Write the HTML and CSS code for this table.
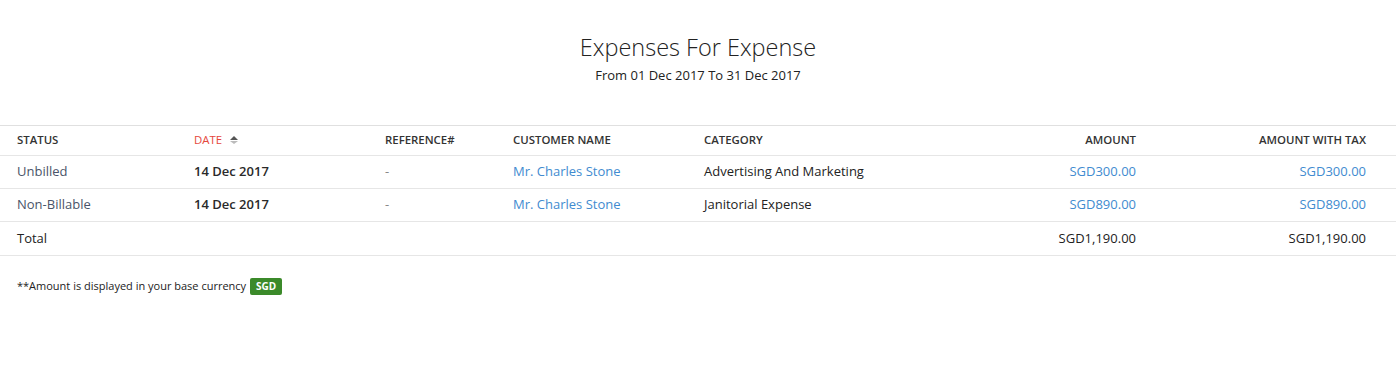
FILE: index.html
```html
<!DOCTYPE html>
<html>
<head>
<meta charset="utf-8">
<link rel="stylesheet" href="styles.css">
</head>
<body>
<div class="report">
  <header class="report-head">
    <h1 class="report-title">Expenses For Expense</h1>
    <div class="report-range">From 01 Dec 2017 To 31 Dec 2017</div>
  </header>
  <table class="grid">
    <colgroup>
      <col class="c-status"><col class="c-date"><col class="c-ref"><col class="c-cust"><col class="c-cat"><col class="c-amt"><col class="c-tax">
    </colgroup>
    <thead>
      <tr>
        <th>Status</th>
        <th class="sorted">Date <svg class="sort" width="8" height="10" viewBox="0 0 8 10"><path d="M4 1 L8 5 L0 5 Z" fill="#555"/><path d="M0 6 L8 6 L4 9 Z" fill="#bbb"/></svg></th>
        <th>Reference#</th>
        <th>Customer Name</th>
        <th>Category</th>
        <th class="num">Amount</th>
        <th class="num last">Amount With Tax</th>
      </tr>
    </thead>
    <tbody>
      <tr>
        <td class="status">Unbilled</td>
        <td class="date">14 Dec 2017</td>
        <td class="muted">-</td>
        <td class="link">Mr. Charles Stone</td>
        <td>Advertising And Marketing</td>
        <td class="num link">SGD300.00</td>
        <td class="num link last">SGD300.00</td>
      </tr>
      <tr>
        <td class="status">Non-Billable</td>
        <td class="date">14 Dec 2017</td>
        <td class="muted">-</td>
        <td class="link">Mr. Charles Stone</td>
        <td>Janitorial Expense</td>
        <td class="num link">SGD890.00</td>
        <td class="num link last">SGD890.00</td>
      </tr>
      <tr class="total">
        <td>Total</td>
        <td></td><td></td><td></td><td></td>
        <td class="num">SGD1,190.00</td>
        <td class="num last">SGD1,190.00</td>
      </tr>
    </tbody>
  </table>
  <p class="note">**Amount is displayed in your base currency <span class="badge">SGD</span></p>
</div>
</body>
</html>
```
FILE: styles.css
```css
html, body {
  margin: 0;
  padding: 0;
  background: #fff;
}
body {
  font-family: "Open Sans", "Liberation Sans", sans-serif;
  color: #222;
}
.report-head {
  text-align: center;
  padding-top: 33px;
  height: 90px;
  box-sizing: border-box;
}
.report-title {
  margin: 0;
  font-size: 23.5px;
  font-weight: 300;
  line-height: 28px;
  color: #222;
}
.report-range {
  margin-top: 6px;
  font-size: 13px;
  line-height: 17px;
  color: #222;
}
.grid {
  width: 100%;
  margin-top: 35px;
  border-collapse: collapse;
  table-layout: fixed;
}
.c-status { width: 177px; }
.c-date { width: 191px; }
.c-ref { width: 128px; }
.c-cust { width: 191px; }
.c-cat { width: 249px; }
.c-amt { width: 200px; }
.c-tax { width: auto; }
.grid th, .grid td {
  padding: 0 0 2px 17px;
  text-align: left;
  white-space: nowrap;
  border-bottom: 1px solid #e6e6e6;
}
.grid thead tr {
  border-top: 1px solid #e0e0e0;
}
.grid th {
  height: 27px;
  font-size: 11.4px;
  font-weight: 600;
  text-transform: uppercase;
  color: #333;
}
.grid th.sorted {
  color: #e5473d;
  font-weight: 500;
}
.sort {
  margin-left: 5px;
  vertical-align: -1px;
}
.grid td {
  height: 30px;
  font-size: 13px;
  color: #222;
}
.grid .num { text-align: right; }
.grid .last { padding-right: 30px; }
.grid td.status { color: #4a5469; }
.grid td.date { font-weight: 600; color: #2a2a2a; }
.grid td.muted { color: #888; }
.grid td.link { color: #418bd0; }
.grid tr.total td { height: 31px; font-size: 13px; color: #222; }
.note {
  margin: 22px 0 0 17px;
  font-size: 11px;
  color: #222;
}
.badge {
  display: inline-block;
  background: #3b8a2a;
  color: #fff;
  font-size: 10px;
  font-weight: 700;
  padding: 1px 6px 2px;
  border-radius: 2px;
  margin-left: 1px;
}
```
